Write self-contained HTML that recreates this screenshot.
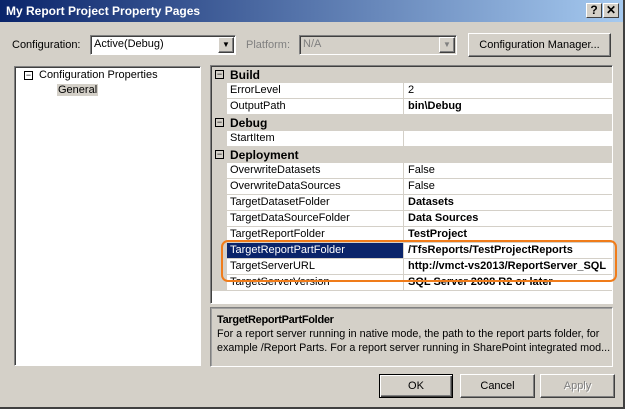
<!DOCTYPE html>
<html><head><style>
*{margin:0;padding:0;box-sizing:border-box}
body{width:625px;height:409px;background:#d4d0c8;font-family:"Liberation Sans",sans-serif;font-size:11px;position:relative;overflow:hidden;color:#000}
.a{position:absolute}
.title{left:0;top:0;width:625px;height:22px;background:linear-gradient(90deg,#0a246a,#a6caf0);color:#fff;font-weight:bold;font-size:12px;padding:4px 0 0 6px}
.tb{top:3px;width:16px;height:15px;background:#d4d0c8;border:1px solid;border-color:#fff #404040 #404040 #fff;color:#000;font-weight:bold;font-size:12px;text-align:center;line-height:13px}
.sunk{border:1px solid;border-color:#808080 #fff #fff #808080;box-shadow:inset 1px 1px 0 #404040}
.btn{border:1px solid;border-color:#fff #404040 #404040 #fff;box-shadow:inset -1px -1px 0 #808080;text-align:center;background:#d4d0c8}
.row{position:absolute;left:0;width:400px;height:16px;border-bottom:1px solid #d4d0c8}
.n{position:absolute;left:15px;width:177px;height:15px;background:#fff;padding:1px 0 0 3px;border-right:1px solid #d4d0c8}
.v{position:absolute;left:193px;width:210px;height:15px;background:#fff;padding:1px 0 0 3px;white-space:nowrap;overflow:hidden}
.g{position:absolute;left:15px;height:15px;font-weight:bold;font-size:12px;padding:1px 0 0 3px}
.pm{position:absolute;left:3px;top:3px;width:9px;height:9px;border:1px solid #000;font-size:9px;line-height:6px;text-align:center}
b{font-weight:bold}
.dl{white-space:nowrap;transform:scaleX(0.98);transform-origin:left;line-height:14px}
</style></head><body>
<div class="a title">My Report Project Property Pages</div>
<div class="a tb" style="left:586px">?</div>
<div class="a tb" style="left:603px">✕</div>

<div class="a" style="left:12px;top:39px">Configuration:</div>
<div class="a sunk" style="left:90px;top:35px;width:146px;height:20px;background:#fff;padding:2px 3px">Active(Debug)</div>
<div class="a btn" style="left:218px;top:37px;width:16px;height:16px;font-size:8px;line-height:14px">▼</div>
<div class="a" style="left:246px;top:39px;color:#808080">Platform:</div>
<div class="a sunk" style="left:299px;top:35px;width:158px;height:20px;background:#d4d0c8;padding:2px 3px;color:#808080">N/A</div>
<div class="a btn" style="left:439px;top:37px;width:16px;height:16px;font-size:8px;line-height:14px;color:#808080">▼</div>
<div class="a btn" style="left:468px;top:33px;width:143px;height:24px;line-height:22px">Configuration Manager...</div>

<div class="a sunk" style="left:14px;top:66px;width:187px;height:300px;background:#fff">
 <div class="pm" style="left:9px;top:4px">−</div>
 <div class="a" style="left:24px;top:2px">Configuration Properties</div>
 <div class="a" style="left:42px;top:17px;background:#d4d0c8;padding:0 1px">General</div>
</div>

<div class="a sunk" style="left:210px;top:65px;width:403px;height:239px;background:#fff;overflow:hidden">
 <div class="a" style="left:1px;top:1px;width:400px;height:236px">
  <div class="a" style="left:0;top:0;width:15px;height:224px;background:#d4d0c8"></div>
  <div class="row" style="top:0;background:#d4d0c8"><div class="pm">−</div><div class="g">Build</div></div>
  <div class="row" style="top:16px"><div class="n">ErrorLevel</div><div class="v">2</div></div>
  <div class="row" style="top:32px"><div class="n">OutputPath</div><div class="v"><b>bin\Debug</b></div></div>
  <div class="row" style="top:48px;background:#d4d0c8"><div class="pm">−</div><div class="g">Debug</div></div>
  <div class="row" style="top:64px"><div class="n">StartItem</div><div class="v"></div></div>
  <div class="row" style="top:80px;background:#d4d0c8"><div class="pm">−</div><div class="g">Deployment</div></div>
  <div class="row" style="top:96px"><div class="n">OverwriteDatasets</div><div class="v">False</div></div>
  <div class="row" style="top:112px"><div class="n">OverwriteDataSources</div><div class="v">False</div></div>
  <div class="row" style="top:128px"><div class="n">TargetDatasetFolder</div><div class="v"><b>Datasets</b></div></div>
  <div class="row" style="top:144px"><div class="n">TargetDataSourceFolder</div><div class="v"><b>Data Sources</b></div></div>
  <div class="row" style="top:160px"><div class="n">TargetReportFolder</div><div class="v"><b>TestProject</b></div></div>
  <div class="row" style="top:176px"><div class="n" style="background:#0a246a;color:#fff">TargetReportPartFolder</div><div class="v"><b>/TfsReports/TestProjectReports</b></div></div>
  <div class="row" style="top:192px"><div class="n">TargetServerURL</div><div class="v"><b>http://vmct-vs2013/ReportServer_SQL</b></div></div>
  <div class="row" style="top:208px"><div class="n">TargetServerVersion</div><div class="v"><b>SQL Server 2008 R2 or later</b></div></div>
 </div>
</div>
<div class="a" style="left:221px;top:240px;width:396px;height:42px;border:2px solid #f07c1a;border-radius:7px"></div>

<div class="a" style="left:210px;top:307px;width:403px;height:60px;border:1px solid;border-color:#808080 #fff #fff #808080;box-shadow:inset 1px 1px 0 #a0a0a0;padding:5px 6px">
 <div style="font-weight:bold;letter-spacing:-0.3px;line-height:14px">TargetReportPartFolder</div>
 <div class="dl">For a report server running in native mode, the path to the report parts folder, for</div>
 <div class="dl">example /Report Parts. For a report server running in SharePoint integrated mod...</div>
</div>

<div class="a btn" style="left:379px;top:374px;width:74px;height:24px;line-height:22px;border:1px solid #000;box-shadow:inset 1px 1px 0 #fff,inset -1px -1px 0 #404040,inset -2px -2px 0 #808080">OK</div>
<div class="a btn" style="left:460px;top:374px;width:75px;height:24px;line-height:22px">Cancel</div>
<div class="a btn" style="left:540px;top:374px;width:75px;height:24px;line-height:22px;color:#808080;text-shadow:1px 1px 0 #fff">Apply</div>
<div class="a" style="left:0;top:407px;width:625px;height:2px;background:#404040"></div>
<div class="a" style="left:623px;top:0;width:2px;height:409px;background:#404040"></div>
</body></html>
